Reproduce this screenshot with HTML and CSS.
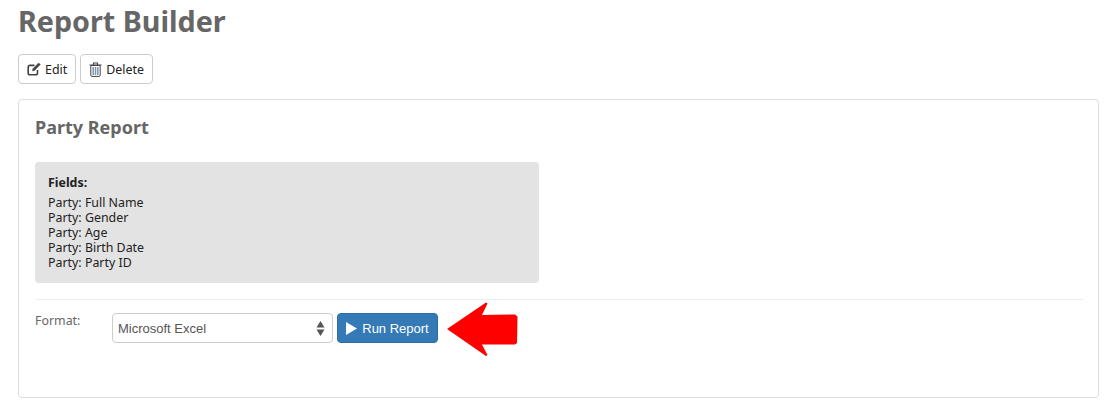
FILE: index.html
```html
<!DOCTYPE html>
<html lang="en">
<head>
    <meta charset="UTF-8">
    <title>Report Builder</title>
    <link rel="stylesheet" href="styles.css">
</head>
<body>
    <h1 class="page-title">Report Builder</h1>

    <div class="toolbar">
        <a class="btn" href="#">
            <svg class="btn-icon" width="14" height="14" viewBox="0 0 14 14" fill="none" stroke="#444" stroke-width="1.6">
                <path d="M10.500 8v3a1.800 1.800 0 0 1-1.800 1.800H3A1.800 1.800 0 0 1 1.200 11V5.200A1.800 1.800 0 0 1 3 3.400h4.500"/>
                <path d="M5.500 8.800l.4-2L11.600 1l1.600 1.600-5.700 5.800z" fill="#444" stroke-width="0.6"/>
            </svg>
            Edit
        </a>
        <a class="btn" href="#">
            <svg class="btn-icon" width="13" height="15" viewBox="0 0 13 15" fill="none" stroke="#444">
                <path d="M.5 3h12M4.500 3V1h4V3" stroke-width="1.100"/>
                <path d="M1.800 3.500h9.400v9.700a1.200 1.200 0 0 1-1.200 1.200H3a1.200 1.200 0 0 1-1.200-1.200z" stroke-width="1"/>
                <path d="M4.200 5v8M6.500 5v8M8.800 5v8" stroke="#7d93ad" stroke-width="1.500"/>
            </svg>
            Delete
        </a>
    </div>

    <div class="panel">
        <h2 class="panel-title">Party Report</h2>

        <div class="fields">
            <div class="fields-title">Fields:</div>
            <div>Party: Full Name</div>
            <div>Party: Gender</div>
            <div>Party: Age</div>
            <div>Party: Birth Date</div>
            <div>Party: Party ID</div>
        </div>

        <hr class="divider">

        <div class="run-row">
            <label class="format-label" for="format">Format:</label>
            <div class="select-box" id="format">
                <span>Microsoft Excel</span>
                <svg width="9" height="15" viewBox="0 0 9 15" fill="#555">
                    <path d="M4.500 0L8.500 6.500H.5z"/>
                    <path d="M.5 8.500h8L4.500 15z"/>
                </svg>
            </div>
            <a class="btn-run" href="#">
                <svg width="11" height="13" viewBox="0 0 11 13" fill="#fff"><path d="M0 0l11 6.500L0 13z"/></svg>
                Run Report
            </a>
            <svg class="arrow" width="71" height="54" viewBox="0 0 71 54" fill="#f00">
                <path d="M0 27L39 .5l1.500 1L35 13l33-.5 2.500 2L70 41l-2 1.500H35l5.500 10.500-1.500 1z"/>
            </svg>
        </div>
    </div>
</body>
</html>
```

FILE: styles.css
```css
body {
    margin: 0;
    padding: 0 6px 0 18px;
    font-family: "Noto Sans", "Open Sans", sans-serif;
    font-size: 12.4px;
    color: #222;
    background-color: #fff;
    overflow: hidden;
}

.page-title {
    margin: 0;
    height: 54px;
    font-size: 28.7px;
    line-height: 41px;
    font-weight: 700;
    color: #666;
}

/* Edit / Delete */
.toolbar {
    display: flex;
    gap: 4px;
    margin-bottom: 15px;
}

.btn {
    display: flex;
    align-items: center;
    gap: 4px;
    box-sizing: border-box;
    height: 30px;
    padding: 0 8px;
    border: 1px solid #ccc;
    border-radius: 4px;
    color: #222;
    text-decoration: none;
}

.panel {
    box-sizing: border-box;
    height: 299px;
    padding: 0 15px 0 16px;
    border: 1px solid #ddd;
    border-radius: 4px;
}

.panel-title {
    margin: 0;
    padding-top: 14px;
    height: 48px;
    box-sizing: border-box;
    font-size: 18px;
    line-height: 27px;
    font-weight: 700;
    color: #666;
}

.fields {
    box-sizing: border-box;
    width: 504px;
    height: 121px;
    margin-top: 14px;
    padding: 12px 13px;
    background-color: #e3e3e3;
    border-radius: 4px;
    line-height: 15px;
}

.fields-title {
    margin-bottom: 4px;
    font-weight: 700;
    line-height: 17px;
}

.divider {
    margin: 16px 0 0;
    border: 0;
    border-top: 1px solid #eee;
}

.run-row {
    display: flex;
    align-items: flex-start;
    margin-top: 2px;
}

.format-label {
    width: 77px;
    margin-top: 10px;
    color: #666;
}

.select-box {
    display: flex;
    align-items: center;
    justify-content: space-between;
    box-sizing: border-box;
    width: 221px;
    height: 30px;
    margin-top: 11px;
    padding: 0 7px 0 5px;
    border: 1px solid #ccc;
    border-radius: 4px;
    font-family: "Liberation Sans", Arial, sans-serif;
    font-size: 13px;
    color: #555;
}

.btn-run {
    display: flex;
    align-items: center;
    justify-content: center;
    gap: 5px;
    box-sizing: border-box;
    width: 101px;
    height: 30px;
    margin: 11px 9px 0 4px;
    border: 1px solid #2e6da4;
    border-radius: 4px;
    background-color: #337ab7;
    font-family: "Liberation Sans", Arial, sans-serif;
    font-size: 13px;
    color: #fff;
    text-decoration: none;
}
```
